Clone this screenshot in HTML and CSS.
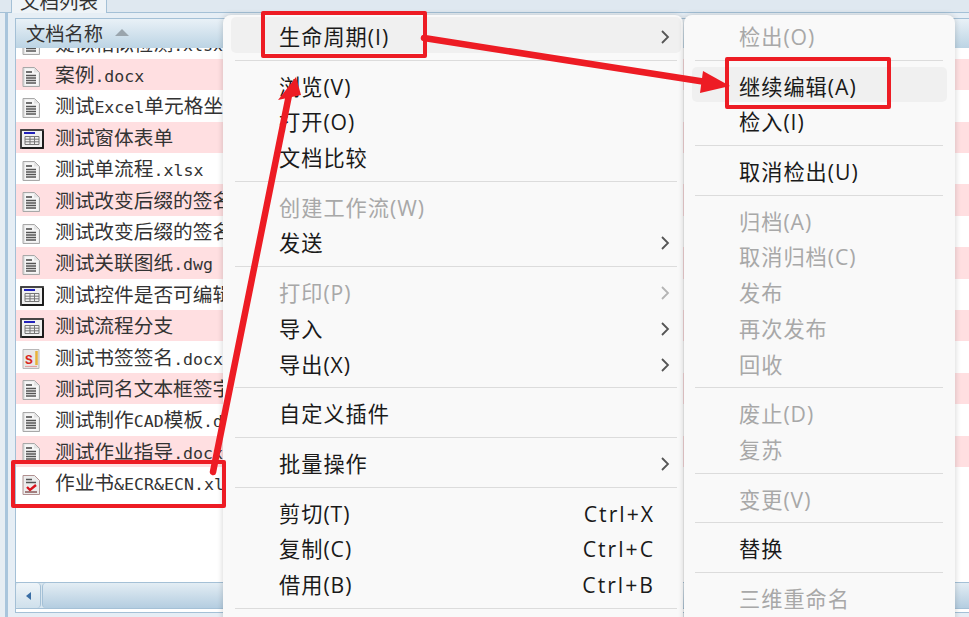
FILE: index.html
```html
<!DOCTYPE html>
<html lang="zh-CN">
<head>
<meta charset="utf-8">
<title>文档列表</title>
<link rel="stylesheet" href="styles.css">
</head>
<body>
<svg class="defs" width="0" height="0" aria-hidden="true">
  <symbol id="doc" viewBox="0 0 18 20">
    <path d="M1 .5h11.500l5 5v14H1z" fill="#e4e4e4" stroke="#a8a8a8"/>
    <path d="M3 1.500h9v4h4.500v13H3z" fill="#f6f6f6"/>
    <path d="M4 5h6" stroke="#444" stroke-width="1.500"/>
    <path d="M4 8.500h10M4 11h10M4 13.500h10M4 16h10" stroke="#555" stroke-width="1.500"/>
  </symbol>
  <symbol id="form" viewBox="0 0 24 20">
    <rect x="1" y="1" width="22" height="18" fill="#f0f0f0" stroke="#333" stroke-width="1.800"/>
    <path d="M23 2v17H2" fill="none" stroke="#111" stroke-width="1.500"/>
    <path d="M4 4h11" stroke="#2222bb" stroke-width="2"/>
    <path d="M5 7.500h14v8H5zM5 10.200h14M5 12.800h14M10 7.500v8M14.500 7.500v8" fill="none" stroke="#777"/>
  </symbol>
  <symbol id="sign" viewBox="0 0 18 20">
    <path d="M1 .5h16v19H1z" fill="#e8e8e8" stroke="#b8b8b8"/>
    <text x="3" y="15" class="sign-mark">S</text>
    <path d="M14.500 2v14" stroke="#e8b23a" stroke-width="2.500"/>
    <path d="M3 17.500h12" stroke="#e2a0a0" stroke-width="1.200"/>
  </symbol>
  <symbol id="check" viewBox="0 0 18 20">
    <path d="M1 .5h11.500l5 5v14H1z" fill="#ececec" stroke="#b09090"/>
    <path d="M4 4.500h6M4 7.500h10" stroke="#555" stroke-width="1.500"/>
    <path d="M5 12l3 3 6-5" fill="none" stroke="#d8121c" stroke-width="2.400"/>
    <path d="M3 17h12" stroke="#8a5a5a" stroke-width="1.500"/>
  </symbol>
</svg>

<div class="app">
  <div class="tabbar"><div class="tab">文档列表</div></div>
  <div class="panel">
    <div class="table">
      <div class="thead"><span class="th-label">文档名称</span><span class="sort"></span></div>
      <div class="list">
        <div class="row row-first"><svg class="ico"><use href="#doc"/></svg><span>疑似相似检测<i>.xlsx</i></span></div>
        <div class="row pink"><svg class="ico"><use href="#doc"/></svg><span>案例<i>.docx</i></span></div>
        <div class="row"><svg class="ico"><use href="#doc"/></svg><span>测试<i>Excel</i>单元格坐标定位</span></div>
        <div class="row pink"><svg class="ico ico-form"><use href="#form"/></svg><span>测试窗体表单</span></div>
        <div class="row"><svg class="ico"><use href="#doc"/></svg><span>测试单流程<i>.xlsx</i></span></div>
        <div class="row pink"><svg class="ico"><use href="#doc"/></svg><span>测试改变后缀的签名</span></div>
        <div class="row"><svg class="ico"><use href="#doc"/></svg><span>测试改变后缀的签名</span></div>
        <div class="row pink"><svg class="ico"><use href="#doc"/></svg><span>测试关联图纸<i>.dwg</i></span></div>
        <div class="row"><svg class="ico ico-form"><use href="#form"/></svg><span>测试控件是否可编辑</span></div>
        <div class="row pink"><svg class="ico ico-form"><use href="#form"/></svg><span>测试流程分支</span></div>
        <div class="row"><svg class="ico"><use href="#sign"/></svg><span>测试书签签名<i>.docx</i></span></div>
        <div class="row pink"><svg class="ico"><use href="#doc"/></svg><span>测试同名文本框签字</span></div>
        <div class="row"><svg class="ico"><use href="#doc"/></svg><span>测试制作<i>CAD</i>模板<i>.dwg</i></span></div>
        <div class="row pink"><svg class="ico"><use href="#doc"/></svg><span>测试作业指导<i>.docx</i></span></div>
        <div class="row"><svg class="ico"><use href="#check"/></svg><span>作业书<i>&amp;ECR&amp;ECN.xlsx</i></span></div>
      </div>
      <div class="hscroll"><div class="scroll-btn"><span class="scroll-arrow"></span></div><div class="scroll-thumb"></div></div>
    </div>
  </div>
</div>

<div class="menu menu-main">
  <div class="item hot">生命周期(I)<svg class="chev" viewBox="0 0 10 16"><path d="M2 2l6 6-6 6"/></svg></div>
  <div class="sep"></div>
  <div class="item">浏览(V)</div>
  <div class="item">打开(O)</div>
  <div class="item">文档比较</div>
  <div class="sep"></div>
  <div class="item off">创建工作流(W)</div>
  <div class="item">发送<svg class="chev" viewBox="0 0 10 16"><path d="M2 2l6 6-6 6"/></svg></div>
  <div class="sep"></div>
  <div class="item off">打印(P)<svg class="chev" viewBox="0 0 10 16"><path d="M2 2l6 6-6 6"/></svg></div>
  <div class="item">导入<svg class="chev" viewBox="0 0 10 16"><path d="M2 2l6 6-6 6"/></svg></div>
  <div class="item">导出(X)<svg class="chev" viewBox="0 0 10 16"><path d="M2 2l6 6-6 6"/></svg></div>
  <div class="sep"></div>
  <div class="item">自定义插件</div>
  <div class="sep"></div>
  <div class="item">批量操作<svg class="chev" viewBox="0 0 10 16"><path d="M2 2l6 6-6 6"/></svg></div>
  <div class="sep"></div>
  <div class="item">剪切(T)<span class="key">Ctrl+X</span></div>
  <div class="item">复制(C)<span class="key">Ctrl+C</span></div>
  <div class="item">借用(B)<span class="key">Ctrl+B</span></div>
  <div class="sep"></div>
</div>

<div class="menu menu-sub">
  <div class="item off">检出(O)</div>
  <div class="sep"></div>
  <div class="item hot">继续编辑(A)</div>
  <div class="item">检入(I)</div>
  <div class="sep"></div>
  <div class="item">取消检出(U)</div>
  <div class="sep"></div>
  <div class="item off">归档(A)</div>
  <div class="item off">取消归档(C)</div>
  <div class="item off">发布</div>
  <div class="item off">再次发布</div>
  <div class="item off">回收</div>
  <div class="sep"></div>
  <div class="item off">废止(D)</div>
  <div class="item off">复苏</div>
  <div class="sep"></div>
  <div class="item off">变更(V)</div>
  <div class="sep"></div>
  <div class="item">替换</div>
  <div class="sep"></div>
  <div class="item off">三维重命名</div>
</div>

<div class="mark mark-row"></div>
<div class="mark mark-life"></div>
<div class="mark mark-edit"></div>
<svg class="arrows" viewBox="0 0 969 617" aria-hidden="true">
  <path class="shaft" d="M213 472L289 95"/>
  <path class="head" d="M296 77L278 100 301 95z"/>
  <path class="shaft" d="M424 38L706 82"/>
  <path class="head" d="M730 86L703 71 700 93z"/>
</svg>
</body>
</html>
```

FILE: styles.css
```css
html, body {
  margin: 0;
  padding: 0;
  width: 969px;
  height: 617px;
  overflow: hidden;
}

body {
  position: relative;
  background: #dfe8f0;
  font-family: "Noto Sans CJK SC", sans-serif;
}

.defs { position: absolute; }

.sign-mark {
  font-family: "Liberation Mono", monospace;
  font-size: 13px;
  font-weight: 700;
  fill: #d8261c;
}

.app {
  display: flex;
  flex-direction: column;
  height: 617px;
}

.tabbar {
  height: 12px;
  flex: none;
  padding-left: 11px;
  background: #dfe8f0;
  border-bottom: 1px solid #a4c0d6;
}

.tab {
  width: 94px;
  height: 13px;
  overflow: hidden;
  background: #eef3f7;
  border: 1px solid #a4c0d6;
  border-top: 0;
  border-bottom: 0;
  font-size: 19.500px;
  line-height: 2px;
  text-align: center;
  color: #333;
}

.panel {
  flex: 1;
  min-height: 0;
  padding: 5px 0 4px 15px;
  background: linear-gradient(to right, #e6edf3 0, #e6edf3 5px, #a9c5dc 5px, #a9c5dc 8px, #e6eef5 8px, #e6eef5 15px);
}

.table {
  height: 100%;
  display: flex;
  flex-direction: column;
  background: #fff;
  border: 1px solid #a4c0d6;
  border-right: 0;
  box-sizing: border-box;
}

.thead {
  height: 29px;
  flex: none;
  display: flex;
  align-items: center;
  padding-left: 10px;
  background: linear-gradient(#e9f1f7, #bcd4e4);
  box-sizing: border-box;
}

.th-label {
  font-size: 19.300px;
  line-height: 29px;
  color: #333;
}

.sort {
  margin-left: 12px;
  margin-top: -2px;
  width: 0;
  height: 0;
  border-left: 7px solid transparent;
  border-right: 7px solid transparent;
  border-bottom: 7px solid #9aa5ad;
}

.list {
  flex: 1;
  min-height: 0;
  overflow: hidden;
}

.row {
  height: 31.400px;
  display: flex;
  align-items: center;
  background: #fff;
  font-size: 19.700px;
  color: #333;
  white-space: nowrap;
}

.row-first { margin-top: -20.500px; }

.pink { background: #ffdfe1; }

.row span { margin-top: -2px; }

.row i {
  font-family: "DejaVu Sans Mono", monospace;
  font-style: normal;
  font-size: 16.600px;
}

.ico {
  flex: none;
  width: 18px;
  height: 20px;
  margin: 4px 15px 0 6px;
}

.ico-form {
  width: 24px;
  margin: 4px 11px 0 4px;
}

.hscroll {
  flex: none;
  height: 25px;
  margin-bottom: 3px;
  display: flex;
  gap: 1px;
  background: #d9e6ef;
  border-top: 1px solid #a4c0d6;
  border-bottom: 1px solid #a4c0d6;
}

.scroll-btn {
  width: 24px;
  display: flex;
  align-items: center;
  justify-content: center;
  background: linear-gradient(#eef4f8, #cfe0ec);
  border-right: 1px solid #a4c0d6;
  border-radius: 4px;
}

.scroll-arrow {
  width: 0;
  height: 0;
  border-top: 4px solid transparent;
  border-bottom: 4px solid transparent;
  border-right: 5px solid #3a6ea5;
}

.scroll-thumb {
  flex: 1;
  background: linear-gradient(#e3edf4, #b4cde0);
  border-left: 1px solid #a4c0d6;
  border-radius: 4px 0 0 4px;
}

.menu {
  position: absolute;
  top: 15px;
  height: 640px;
  box-sizing: border-box;
  padding-top: 2px;
  background: #f9f9f9;
  border-radius: 8px;
  box-shadow: 0 0 6px rgba(0, 0, 0, 0.18);
  font-family: "Open Sans", "Noto Sans CJK SC", sans-serif;
  font-size: 21.200px;
  letter-spacing: 1px;
  color: #1a1a1a;
}

.menu-main {
  left: 223px;
  width: 460px;
  padding-left: 8px;
  padding-right: 2px;
}

.menu-sub {
  left: 684px;
  width: 271px;
  padding-left: 8px;
  padding-right: 8px;
}

.item {
  position: relative;
  height: 35.700px;
  box-sizing: border-box;
  padding-left: 48px;
  padding-top: 2px;
  line-height: 35.700px;
  border-radius: 5px;
  white-space: nowrap;
}

.menu-sub .item { padding-left: 47px; }

.hot { background: #f0f0f0; }

.off { color: #a8a8a8; }

.sep {
  height: 1px;
  margin: 7px 4px 6px 4px;
  background: #dcdcdc;
}

.menu-sub .sep { margin-left: 3px; margin-right: 4px; }

.chev {
  position: absolute;
  right: 11px;
  top: 12px;
  width: 10px;
  height: 16px;
  fill: none;
  stroke: #555;
  stroke-width: 1.800;
}

.off .chev { stroke: #b4b4b4; }

.key {
  position: absolute;
  right: 26px;
  top: 2px;
  letter-spacing: 2px;
}

.mark {
  position: absolute;
  box-sizing: border-box;
  border: 4px solid #ed1c24;
  border-radius: 2px;
}

.mark-row { left: 11px; top: 460px; width: 215px; height: 48px; }
.mark-life { left: 261px; top: 11px; width: 166px; height: 47px; }
.mark-edit { left: 725px; top: 57px; width: 166px; height: 52px; }

.arrows {
  position: absolute;
  left: 0;
  top: 0;
  width: 969px;
  height: 617px;
}

.shaft {
  fill: none;
  stroke: #ed1c24;
  stroke-width: 6.500px;
  stroke-linecap: round;
}

.head { fill: #ed1c24; }
```
